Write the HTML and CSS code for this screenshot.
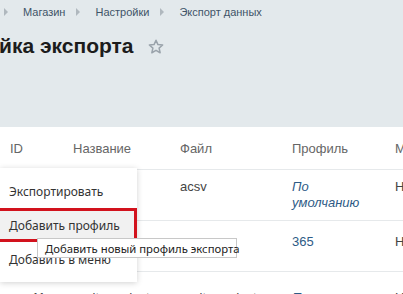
FILE: index.html
```html
<!DOCTYPE html>
<html lang="ru">
<head>
<meta charset="utf-8">
<link rel="stylesheet" href="styles.css">
</head>
<body>
<div class="page">
  <header class="head">
    <nav class="crumbs">
      <span class="arr"></span><a>Магазин</a>
      <span class="arr"></span><a>Настройки</a>
      <span class="arr"></span><a>Экспорт данных</a>
    </nav>
    <div class="title-row">
      <h1 class="title">йка экспорта</h1>
      <svg class="star" width="16" height="16" viewBox="0 0 16 16"><path d="M8 1.3l1.95 4.3 4.7.45-3.55 3.1 1.05 4.6L8 11.35l-4.15 2.4 1.05-4.6-3.55-3.1 4.7-.45z" fill="none" stroke="#9aa3ab" stroke-width="1.5" stroke-linejoin="round"/></svg>
    </div>
  </header>
  <section class="table">
    <div class="row thead">
      <div>ID</div><div>Название</div><div>Файл</div><div>Профиль</div><div>М</div>
    </div>
    <div class="row r1">
      <div></div><div></div><div>acsv</div><div><a class="lnk it">По<br>умолчанию</a></div><div>Н</div>
    </div>
    <div class="row r2">
      <div></div><div></div><div></div><div><a class="lnk">365</a></div><div>Н</div>
    </div>
    <div class="row r3">
      <div class="id3">11</div><div>csvit_product</div><div>csvit_product</div><div><a class="lnk it">По</a></div><div>Н</div>
    </div>
  </section>
  <div class="menu">
    <div class="item">Экспортировать</div>
    <div class="item active">Добавить профиль</div>
    <div class="item">Добавить в меню</div>
  </div>
  <div class="tip">Добавить новый профиль экспорта</div>
</div>
</body>
</html>
```
FILE: styles.css
```css
html, body { margin: 0; padding: 0; }
body { width: 403px; height: 294px; overflow: hidden; background: #fff; font-family: "Liberation Sans", Arial, sans-serif; }
.page { position: relative; height: 294px; overflow: hidden; }
.head { background: #e3e9ec; height: 127px; box-sizing: border-box; padding-top: 5px; }
.crumbs { display: flex; align-items: center; font-size: 11px; color: #3f5468; height: 14px; padding-left: 4px; }
.crumbs a { margin-right: 11px; }
.arr { width: 0; height: 0; border-left: 4px solid #b0b8be; border-top: 4px solid transparent; border-bottom: 4px solid transparent; margin-right: 15px; }
.title-row { display: flex; align-items: center; margin-top: 15px; }
.title { margin: 0 0 0 -1px; font-size: 21px; font-weight: bold; color: #1c1c1c; }
.star { margin-left: 15px; margin-top: 2px; }
.table { font-size: 13px; color: #444; }
.row { display: grid; grid-template-columns: 63px 107px 112px 103px 1fr; padding-left: 10px; border-bottom: 1px solid #e6e9eb; }
.thead { height: 42px; align-items: center; color: #666; }
.r1 { height: 51px; box-sizing: border-box; padding-top: 9px; line-height: 16px; }
.r2 { height: 51px; box-sizing: border-box; padding-top: 13px; }
.r3 { height: 30px; box-sizing: border-box; padding-top: 18px; }
.id3 { padding-left: 22px; }
.lnk { color: #2e5b86; }
.it { font-style: italic; }
.menu { position: absolute; left: 0; top: 168px; width: 137px; height: 114px; background: #fff; box-shadow: 0 1px 6px rgba(0,0,0,0.18); padding-top: 6px; box-sizing: border-box; font-family: "Noto Sans", "Open Sans", sans-serif; font-size: 12px; color: #333; }
.item { height: 34px; display: flex; align-items: center; padding-left: 9px; box-sizing: border-box; }
.item.active { background: #f1f1f1; border: 3px solid #d2121d; border-left: none; margin-left: -3px; padding-left: 12px; }
.tip { position: absolute; left: 37px; top: 238px; width: 200px; height: 20px; box-sizing: border-box; background: #fff; border: 1px solid #c8c8c8; font-family: "Noto Sans", sans-serif; font-size: 11.3px; color: #222; display: flex; align-items: center; padding-left: 7px; white-space: nowrap; }
```
